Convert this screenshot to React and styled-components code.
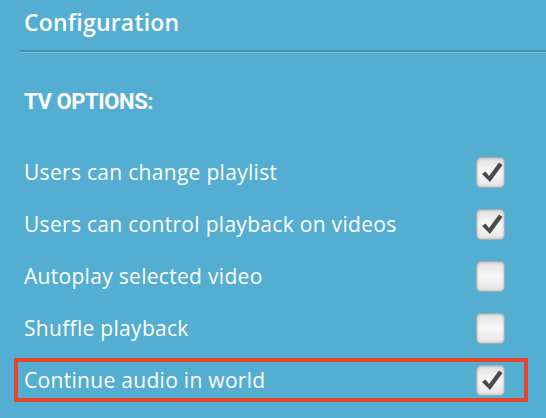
import React, { useState } from "react";
import styled, { createGlobalStyle } from "styled-components";

const GlobalStyle = createGlobalStyle`
  html, body {
    margin: 0;
    padding: 0;
    background: #54aed2;
  }
  body {
    font-family: "Open Sans", "Liberation Sans", sans-serif;
    color: #fff;
  }
`;

const options = [
  { key: "playlist", label: "Users can change playlist", checked: true },
  { key: "playback", label: "Users can control playback on videos", checked: true },
  { key: "autoplay", label: "Autoplay selected video", checked: false },
  { key: "shuffle", label: "Shuffle playback", checked: false },
  { key: "audio", label: "Continue audio in world", checked: true, highlight: true },
];

const Check = () => (
  <svg width="22" height="22" viewBox="0 0 22 22">
    <path
      d="M1 13 L4.5 10.5 L8 15 L18 1.5 L21.5 4 L9 21 Z"
      fill="#4a4a4a"
    />
  </svg>
);

export default () => {
  const [values, setValues] = useState(
    Object.fromEntries(options.map((o) => [o.key, o.checked]))
  );

  const toggle = (key) => setValues({ ...values, [key]: !values[key] });

  return (
    <Page>
      <GlobalStyle />
      <Header>
        <Title>Configuration</Title>
      </Header>
      <Divider />
      <Section>
        <SectionTitle>TV OPTIONS:</SectionTitle>
        <List>
          {options.map((option) => (
            <Row
              key={option.key}
              $highlight={option.highlight}
              onClick={() => toggle(option.key)}
            >
              <Label>{option.label}</Label>
              <Box>{values[option.key] && <Check />}</Box>
            </Row>
          ))}
        </List>
      </Section>
    </Page>
  );
};

const Page = styled.div`
  width: 546px;
  height: 418px;
  overflow: hidden;
`;

const Header = styled.div`
  padding: 7px 0 0 24px;
  height: 44px;
  box-sizing: border-box;
`;

const Title = styled.h1`
  margin: 0;
  font-size: 23px;
  font-weight: 600;
  line-height: 30px;
  letter-spacing: 0.2px;
`;

const Divider = styled.div`
  margin: 6px 0 0 20px;
  height: 2px;
  background: #4790ad;
  border-bottom: 1px solid #6cc3e2;
`;

const Section = styled.div`
  padding: 0 0 0 14px;
`;

const SectionTitle = styled.h2`
  margin: 35px 0 0 10px;
  font-family: "Roboto", "Liberation Sans", sans-serif;
  font-size: 22px;
  font-weight: 700;
  line-height: 28px;
  letter-spacing: -0.4px;
`;

const List = styled.div`
  display: flex;
  flex-direction: column;
  gap: 8px;
  margin-top: 34px;
  width: 514px;
`;

const Row = styled.div`
  display: flex;
  align-items: center;
  justify-content: space-between;
  height: 44px;
  box-sizing: border-box;
  padding: 0 19px 0 6px;
  border: 4px solid ${(p) => (p.$highlight ? "#e8432b" : "transparent")};
  cursor: pointer;
  user-select: none;
`;

const Label = styled.span`
  font-size: 21px;
  font-weight: 400;
  line-height: 26px;
  letter-spacing: 0.3px;
`;

const Box = styled.div`
  width: 29px;
  height: 31px;
  box-sizing: border-box;
  display: flex;
  align-items: center;
  justify-content: center;
  padding-left: 2px;
  border-radius: 5px;
  border: 1px solid #a3afb5;
  background: linear-gradient(#e2e2e2, #f7f7f7 45%, #e8e8e8);
  box-shadow: inset 0 0 3px rgba(0, 0, 0, 0.3);
`;
